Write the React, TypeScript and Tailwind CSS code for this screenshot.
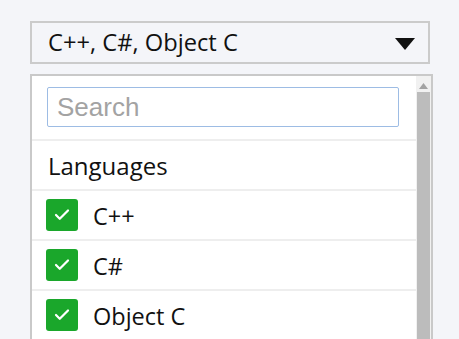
import { Check } from "lucide-react";

const items = ["C++", "C#", "Object C"];

export default function App() {
  return (
    <div className="h-[339px] w-[459px] overflow-hidden bg-[#f4f5f9] pl-[30px] pt-[21px] font-['Open_Sans',sans-serif] text-[#111]">
      {/* Select box */}
      <div className="flex h-[43px] w-[400px] items-center justify-between border-2 border-[#cbcbcb] pl-[16px] pr-[12px]">
        <span className="text-[23.7px] leading-none">C++, C#, Object C</span>
        <svg width="22" height="14" viewBox="0 0 22 14" className="mt-[2px]">
          <path d="M1 1 H21 L11 13 Z" fill="#111" />
        </svg>
      </div>

      {/* Dropdown panel */}
      <div className="mt-[10px] flex h-[300px] w-[403px] border-2 border-[#c9c9c9] bg-white">
        <div className="flex w-[384px] flex-col">
          <div className="px-[15px] pt-[11px] pb-[12px]">
            <div className="flex h-[40px] w-[352px] items-center rounded-[2px] border-[1.5px] border-[#9dbce4] pl-[9px] font-['Liberation_Sans',Arial,sans-serif] text-[26px] text-[#a3a3a3]">
              Search
            </div>
          </div>
          <div className="h-[2px] bg-[#eeeeee]" />
          <div className="flex h-[48px] items-center pl-[16px] pt-[2px] text-[24px] font-medium">Languages</div>
          {items.map((item) => (
            <div key={item}>
              <div className="h-[2px] bg-[#eeeeee]" />
              <div className="flex h-[48px] items-center pl-[14px]">
                <div className="flex h-[32px] w-[32px] items-center justify-center rounded-[3px] bg-[#1aa72b]">
                  <Check size={18} strokeWidth={3} color="#ffffff" />
                </div>
                <span className="ml-[15px] mt-[3px] text-[23.5px]">{item}</span>
              </div>
            </div>
          ))}
        </div>
        {/* Scrollbar */}
        <div className="flex w-[15px] flex-col items-center bg-[#f1f1f1]">
          <svg width="9" height="6" viewBox="0 0 9 6" className="mt-[7px]">
            <path d="M0 6 L4.5 0 L9 6 Z" fill="#a3a3a3" />
          </svg>
          <div className="mt-[3px] h-[260px] w-[13px] bg-[#bcbcbc]" />
        </div>
      </div>
    </div>
  );
}
